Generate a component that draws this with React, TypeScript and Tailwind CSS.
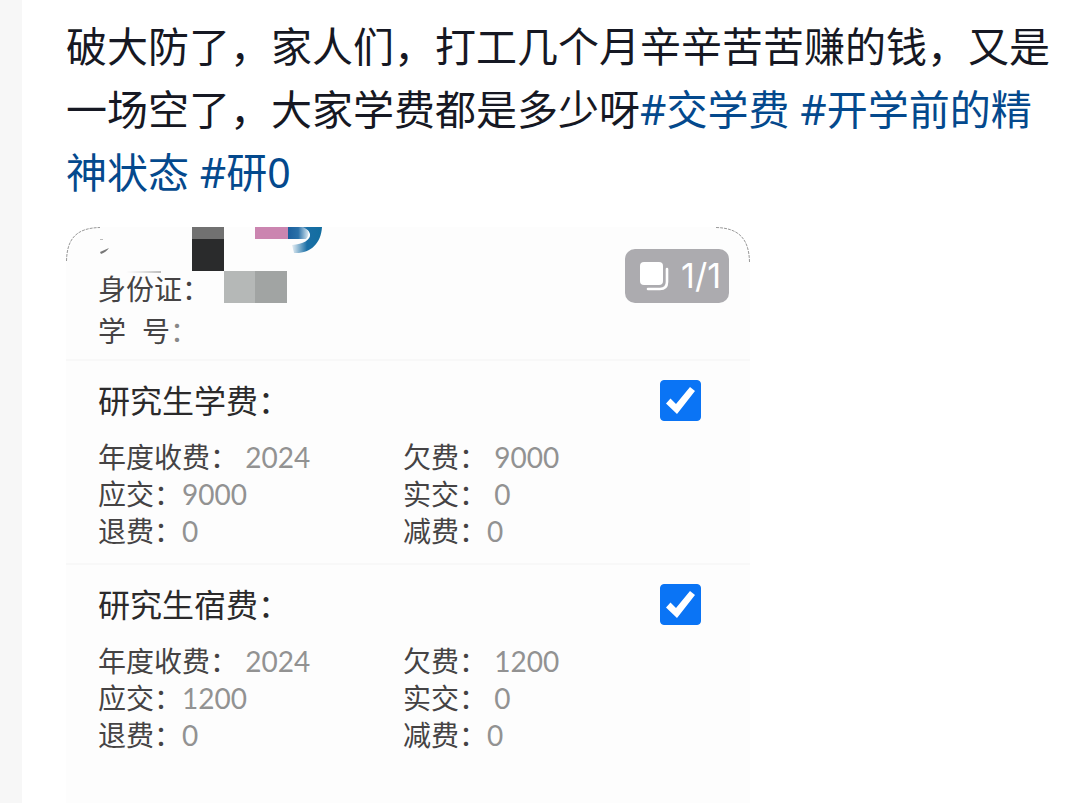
import { useState } from 'react';

type Fee = {
  id: string;
  title: string;
  left: [string, string][];
  right: [string, string][];
};

const fees: Fee[] = [
  {
    id: 'tuition',
    title: '研究生学费：',
    left: [['年度收费：', ' 2024'], ['应交：', '9000'], ['退费：', '0']],
    right: [['欠费：', ' 9000'], ['实交：', ' 0'], ['减费：', '0']],
  },
  {
    id: 'dorm',
    title: '研究生宿费：',
    left: [['年度收费：', ' 2024'], ['应交：', '1200'], ['退费：', '0']],
    right: [['欠费：', ' 1200'], ['实交：', ' 0'], ['减费：', '0']],
  },
];

const FieldList = ({ items }: { items: [string, string][] }) => (
  <dl>
    {items.map(([label, value]) => (
      <div key={label} className="flex">
        <dt className="text-[#454344]">{label}</dt>
        <dd className="whitespace-pre font-['Lato'] text-[#929292]">{value}</dd>
      </div>
    ))}
  </dl>
);

const FeeSection = ({ fee }: { fee: Fee }) => {
  const [checked, setChecked] = useState(true);

  return (
    <section className="border-t-2 border-[#f8f8f8] px-8 pt-[19px] pb-[13px]">
      <div className="flex items-center justify-between pr-[17px]">
        <label htmlFor={fee.id} className="text-[32px] leading-[41px] text-[#2b2a2b]">{fee.title}</label>
        <div className="relative size-[41px]">
          <input
            type="checkbox"
            id={fee.id}
            checked={checked}
            onChange={(e) => setChecked(e.target.checked)}
            className="block size-full appearance-none rounded-sm border border-[#0a74f5] bg-white checked:bg-[#0a74f5]"
          />
          {checked && (
            <svg className="pointer-events-none absolute inset-0" viewBox="0 0 41 41" aria-hidden="true">
              <path d="M6 23.5 L10.5 18.5 L16 24 L30 7 L35 11 L17 34 Z" fill="#fff" />
            </svg>
          )}
        </div>
      </div>
      <div className="mt-[18px] grid grid-cols-[305px_1fr] text-[28px] leading-[37px]">
        <FieldList items={fee.left} />
        <FieldList items={fee.right} />
      </div>
    </section>
  );
};

// Pixelated cover over the name line, plus what is left of the school logo
const Mosaic = () => (
  <svg className="absolute top-0 left-0" width="280" height="80" viewBox="0 0 280 80" aria-hidden="true">
    <defs>
      <linearGradient id="arc" x1="0" y1="0" x2="1" y2="0">
        <stop offset="0" stopColor="#1a6fa6" stopOpacity="0.1" />
        <stop offset="0.5" stopColor="#1a6fa6" />
        <stop offset="1" stopColor="#126d9f" />
      </linearGradient>
      <linearGradient id="block" x1="0" y1="0" x2="1" y2="0">
        <stop offset="0" stopColor="#1b5f9d" />
        <stop offset="0.5" stopColor="#2a70a8" />
        <stop offset="1" stopColor="#d8e8f2" />
      </linearGradient>
      <linearGradient id="smear" x1="0" y1="0" x2="1" y2="0">
        <stop offset="0" stopColor="#ccc" stopOpacity="0" />
        <stop offset="1" stopColor="#bbb" />
      </linearGradient>
    </defs>
    <path d="M0.5 34 C1 12 10 1 34 0.5" fill="none" stroke="#999" strokeWidth="1" strokeDasharray="3 1" />
    <path d="M34 25 C37 24 40 22 43 21 C41 24 38 26 35 27 Z" fill="#777" />
    <rect x="34" y="12" width="3" height="1" fill="#bbb" />
    <rect x="60" y="44" width="35" height="2" fill="url(#smear)" />
    <rect x="126" y="0" width="32" height="12" fill="#717171" />
    <rect x="126" y="12" width="32" height="32" fill="#2a2b2c" />
    <rect x="158" y="44" width="32" height="32" fill="#b5b8b7" />
    <rect x="189" y="44" width="32" height="32" fill="#a1a4a3" />
    <rect x="189" y="0" width="33" height="12" fill="#cb85b0" />
    <path d="M222 0 H238 C243 3 244 8 240 12 H222 Z" fill="url(#block)" />
    <path d="M237 0 H256 C255 17 244 27 228 26 L226 18 C237 17 245 13 244 7 C243 3 240 2 237 0 Z" fill="url(#arc)" />
  </svg>
);

const App: React.FC = () => {
  return (
    <div className="min-h-screen border-l-[22px] border-[#f7f7f7] bg-white pt-[15px] pr-7 pl-11 font-['Noto_Sans','Noto_Sans_CJK_SC',sans-serif]">
      <p className="text-[41px] leading-[63px] text-[#161823]">
        破大防了，家人们，打工几个月辛辛苦苦赚的钱，又是一场空了，大家学费都是多少呀
        <a href="#tuition" className="text-[#04498d]">#交学费</a>{' '}
        <a href="#mood" className="text-[#04498d]">#开学前的精神状态</a>{' '}
        <a href="#yan0" className="text-[#04498d]">#研0</a>
      </p>

      <article className="relative mt-[23px] max-w-[684px] rounded-t-[36px] bg-[#fdfdfd] pb-9">
        <Mosaic />
        <svg className="absolute top-0 right-0" width="36" height="36" viewBox="0 0 36 36" aria-hidden="true">
          <path d="M2 0.5 C25 1 35 12 35.5 35" fill="none" stroke="#999" strokeWidth="1" strokeDasharray="3 1" />
        </svg>

        <div className="absolute top-[22px] right-[21px] flex h-[54px] items-center gap-3 rounded-[10px] bg-[#acabaf] pr-2 pl-[15px] text-white">
          <svg width="29" height="29" viewBox="0 0 29 29" aria-hidden="true">
            <rect x="0" y="0" width="23" height="23" rx="4" fill="#fff" />
            <path d="M27 7 V20 Q27 27 20 27 H8" fill="none" stroke="#fff" strokeWidth="2.6" strokeLinecap="round" />
          </svg>
          <span className="font-['Inter',sans-serif] text-[34px] leading-[54px]">1/1</span>
        </div>

        <div className="px-8 pt-[41px] pb-[7px] text-[28px] leading-[42px] text-[#454344]">
          <p>身份证：</p>
          <p className="flex">
            <span className="mr-4">学</span>
            <span>号</span>
            <span className="text-[#888888]">：</span>
          </p>
        </div>

        {fees.map((fee) => (
          <FeeSection key={fee.id} fee={fee} />
        ))}
      </article>
    </div>
  );
};

export default App;
